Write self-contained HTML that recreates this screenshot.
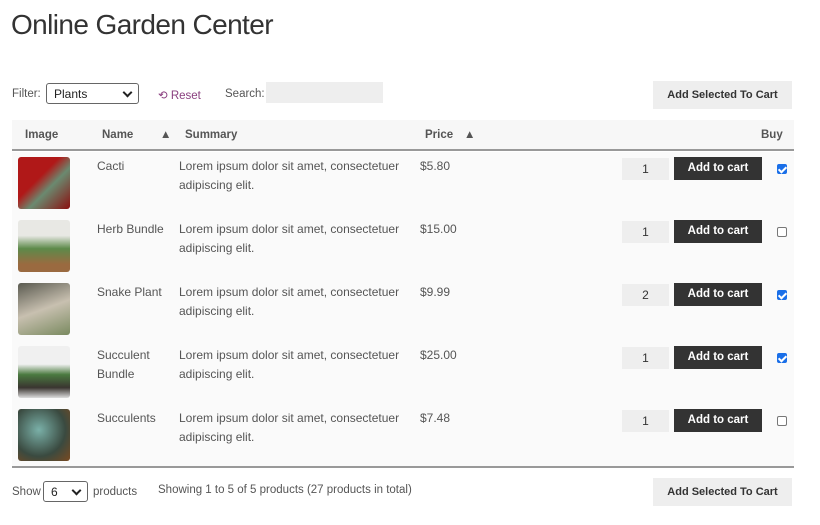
<!DOCTYPE html>
<html><head><meta charset="utf-8"><style>
*{box-sizing:border-box;margin:0;padding:0}
body{width:820px;height:525px;background:#fff;font-family:"Liberation Sans",sans-serif;color:#555;font-size:12px;position:relative;overflow:hidden}
.a{position:absolute}
h1{position:absolute;left:11px;top:9px;font-size:28px;color:#333;letter-spacing:-0.6px;font-weight:normal;font-family:"Liberation Sans",sans-serif}
.sel{position:absolute;border:1px solid #666;border-radius:3px;background:#fff;height:21px;font-size:12px;color:#222;padding:3px 7px}
.sel:after{content:"";position:absolute;right:7px;top:5px;width:5px;height:5px;border-right:2px solid #222;border-bottom:2px solid #222;transform:rotate(45deg)}
.btn{position:absolute;background:#eee;color:#333;font-weight:bold;font-size:11px;text-align:center}
.hdr{position:absolute;left:12px;top:120px;width:782px;height:31px;background:#f7f7f7;border-bottom:2px solid #999}
.hdr span{position:absolute;top:9px;font-weight:bold;color:#555;font-size:11.5px}
.row{position:absolute;left:12px;width:782px;height:63px;background:#fafafa}
.row .img{position:absolute;left:6px;top:5px;width:52px;height:52px;border-radius:3px}
.row .n{position:absolute;left:85px;top:5px;line-height:19px}
.row .s{position:absolute;left:167px;top:5px;line-height:19px}
.row .p{position:absolute;left:408px;top:7px}
.row .q{position:absolute;left:610px;top:6px;width:47px;height:22px;background:#eee;text-align:center;line-height:22px;color:#333}
.row .c{position:absolute;left:662px;top:5px;width:88px;height:23px;background:#333;color:#fff;font-weight:bold;font-size:11.5px;text-align:center;line-height:23px}
.row .k{position:absolute;left:765px;top:12px;width:10px;height:10px;border:1px solid #777;border-radius:2px;background:#fff}
.row .k.on{background:#1a6fe8;border-color:#1a6fe8}
.row .k.on:after{content:"";position:absolute;left:2px;top:0px;width:3px;height:6px;border-right:2px solid #fff;border-bottom:2px solid #fff;transform:rotate(45deg)}
.arr{color:#d4d4d4;font-size:9px;font-weight:normal}
.sm{font-size:11.5px}
</style></head><body>
<h1>Online Garden Center</h1>
<div class="a sm" style="left:12px;top:88px">Filter:</div>
<div class="sel" style="left:46px;top:83px;width:93px">Plants</div>
<div class="a sm" style="left:158px;top:88px;color:#8a3f7f">⟲ Reset</div>
<div class="a sm" style="left:225px;top:88px">Search:</div>
<div class="a" style="left:266px;top:82px;width:117px;height:21px;background:#eee"></div>
<div class="btn" style="left:653px;top:81px;width:139px;height:28px;line-height:28px">Add Selected To Cart</div>
<div class="hdr"><span style="left:13px">Image</span><span style="left:90px">Name</span><span class="arr a" style="left:148px;top:9px">▲<br></span><span style="left:173px">Summary</span><span style="left:413px">Price</span><span class="arr a" style="left:452px;top:9px">▲</span><span style="left:749px">Buy</span></div>

<div class="row" style="top:152px"><div class="img" style="background:linear-gradient(135deg,#b01818 40%,#6a8a70 60%,#8a1010)"></div><div class="n">Cacti</div><div class="s">Lorem ipsum dolor sit amet, consectetuer<br>adipiscing elit.</div><div class="p">$5.80</div><div class="q">1</div><div class="c">Add to cart</div><div class="k on"></div></div>
<div class="row" style="top:215px"><div class="img" style="background:linear-gradient(180deg,#e8e8e4 30%,#5d8a4a 55%,#9a6a40 85%)"></div><div class="n">Herb Bundle</div><div class="s">Lorem ipsum dolor sit amet, consectetuer<br>adipiscing elit.</div><div class="p">$15.00</div><div class="q">1</div><div class="c">Add to cart</div><div class="k"></div></div>
<div class="row" style="top:278px"><div class="img" style="background:linear-gradient(160deg,#5a5a50,#c8c0b0 50%,#7a8a60)"></div><div class="n">Snake Plant</div><div class="s">Lorem ipsum dolor sit amet, consectetuer<br>adipiscing elit.</div><div class="p">$9.99</div><div class="q">2</div><div class="c">Add to cart</div><div class="k on"></div></div>
<div class="row" style="top:341px"><div class="img" style="background:linear-gradient(180deg,#f0f0f0 35%,#4a7a40 55%,#3a3530 80%,#ddd)"></div><div class="n">Succulent<br>Bundle</div><div class="s">Lorem ipsum dolor sit amet, consectetuer<br>adipiscing elit.</div><div class="p">$25.00</div><div class="q">1</div><div class="c">Add to cart</div><div class="k on"></div></div>
<div class="row" style="top:404px;height:62px"><div class="img" style="background:radial-gradient(circle at 40% 40%,#7ab0a8,#3a4a40 60%,#7a4a20)"></div><div class="n">Succulents</div><div class="s">Lorem ipsum dolor sit amet, consectetuer<br>adipiscing elit.</div><div class="p">$7.48</div><div class="q">1</div><div class="c">Add to cart</div><div class="k"></div></div>
<div class="a" style="left:12px;top:466px;width:782px;height:2px;background:#999"></div>

<div class="a sm" style="left:12px;top:486px">Show</div>
<div class="sel" style="left:43px;top:481px;width:45px">6</div>
<div class="a sm" style="left:93px;top:486px">products</div>
<div class="a sm" style="left:158px;top:484px">Showing 1 to 5 of 5 products (27 products in total)</div>
<div class="btn" style="left:653px;top:478px;width:139px;height:28px;line-height:28px">Add Selected To Cart</div>
</body></html>
